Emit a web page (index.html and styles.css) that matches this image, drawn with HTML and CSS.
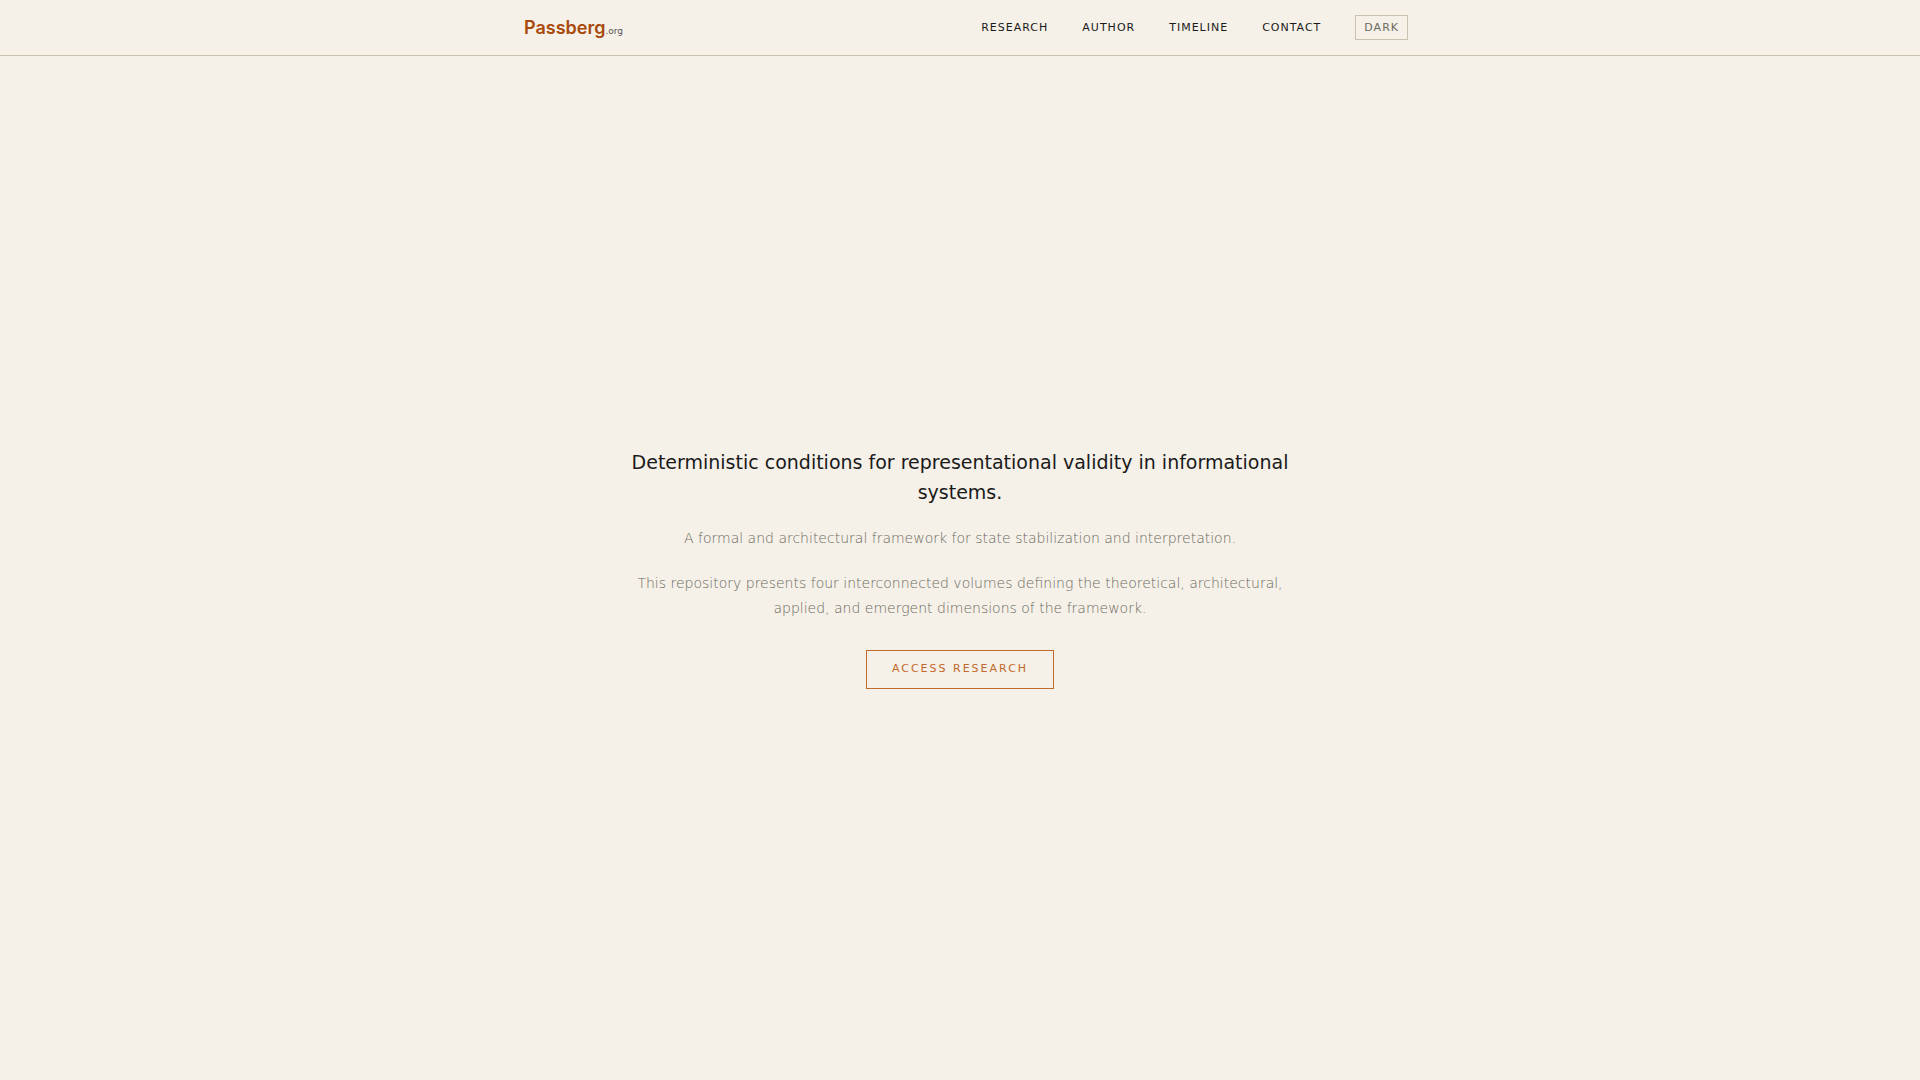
FILE: index.html
```
<!DOCTYPE html>
<html lang="en">
<head>
<meta charset="utf-8">
<meta name="viewport" content="width=device-width, initial-scale=1">
<title>Passberg.org</title>
<link rel="stylesheet" href="styles.css">
</head>
<body>
<header class="site-header">
  <div class="header-inner">
    <a class="logo" href="#"><span class="logo-name">Passberg</span><span class="logo-tld">.org</span></a>
    <nav class="nav" aria-label="Main">
      <a class="nav-link" href="#research">Research</a>
      <a class="nav-link" href="#author">Author</a>
      <a class="nav-link" href="#timeline">Timeline</a>
      <a class="nav-link" href="#contact">Contact</a>
      <button class="theme-toggle" type="button">Dark</button>
    </nav>
  </div>
</header>
<main class="hero">
  <div class="hero-content">
    <h1 class="hero-title">Deterministic conditions for representational validity in informational systems.</h1>
    <p class="hero-text">A formal and architectural framework for state stabilization and interpretation.</p>
    <p class="hero-text">This repository presents four interconnected volumes defining the theoretical, architectural, applied, and emergent dimensions of the framework.</p>
    <a class="cta" href="#research">Access Research</a>
  </div>
</main>
</body>
</html>
```
FILE: styles.css
```
* { box-sizing: border-box; margin: 0; padding: 0; }
body {
  min-height: 100vh;
  display: flex;
  flex-direction: column;
  background: #f5f0e8;
  color: #1a1a1a;
  font-family: "DejaVu Sans", sans-serif;
}
a { text-decoration: none; color: inherit; }
.site-header { border-bottom: 1px solid #c8c3b0; }
.header-inner {
  max-width: 900px;
  margin: 0 auto;
  padding: 15px 2px 15px 14px;
  display: flex;
  align-items: center;
  justify-content: space-between;
}
.logo { display: flex; align-items: baseline; font-family: Inter, sans-serif; }
.logo-name { font-size: 18px; line-height: 24px; font-weight: 600; color: #a84a0c; }
.logo-tld { font-family: "DejaVu Sans", sans-serif; font-size: 9px; color: #555; }
.nav { display: flex; align-items: center; gap: 34px; font-size: 11px; letter-spacing: 1px; text-transform: uppercase; }
.theme-toggle {
  font: inherit;
  letter-spacing: 1px;
  text-transform: uppercase;
  line-height: 13px;
  padding: 5px 8px;
  border: 1px solid #c8c3b0;
  background: transparent;
  color: #6b6b60;
}
.hero { flex: 1; display: flex; align-items: center; justify-content: center; padding: 32px; }
.hero-content { max-width: 680px; text-align: center; }
.hero-title { font-size: 19px; line-height: 30px; font-weight: 400; margin-bottom: 19px; }
.hero-text { font-size: 14px; line-height: 25px; font-weight: 200; color: #6b6b60; margin-bottom: 20px; }
.cta {
  display: inline-block;
  margin-top: 9px;
  padding: 9px 25px 11px;
  border: 1px solid #c0692c;
  color: #c0692c;
  font-size: 11px;
  line-height: 17px;
  letter-spacing: 2px;
  text-transform: uppercase;
}
```
